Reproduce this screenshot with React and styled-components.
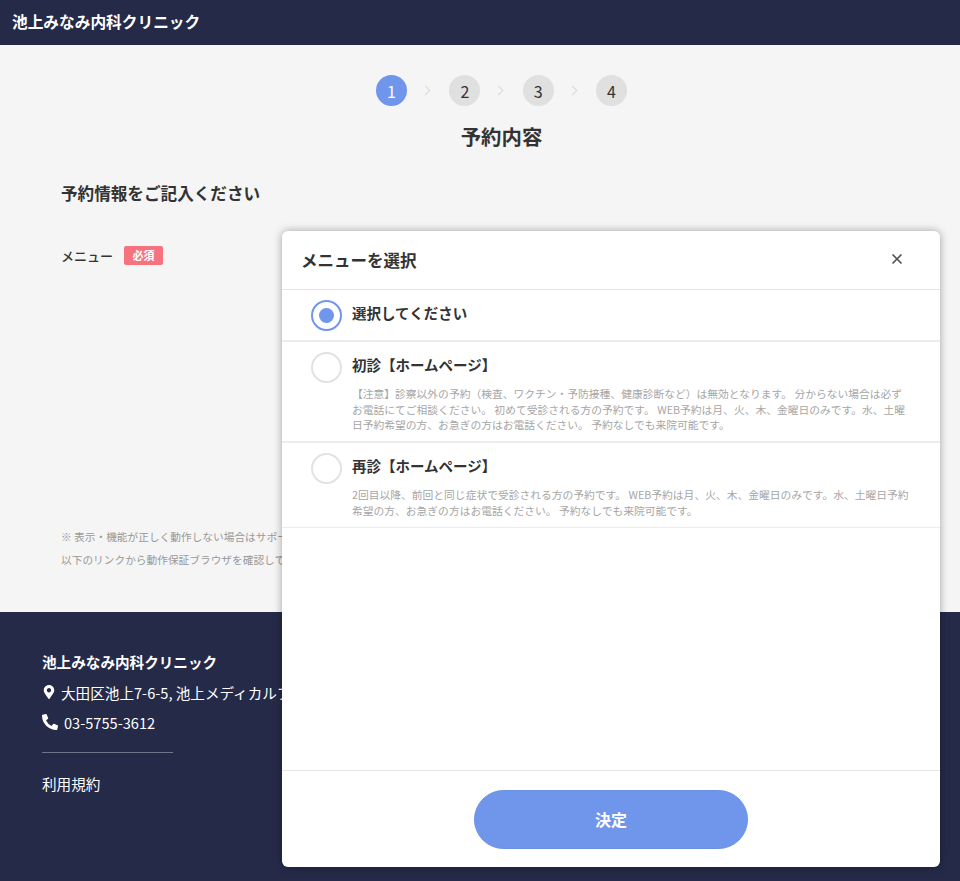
import React from 'react';
import styled, { createGlobalStyle } from 'styled-components';
import { FaMapMarkerAlt, FaPhoneAlt } from 'react-icons/fa';

const GlobalStyle = createGlobalStyle`
  html, body {
    margin: 0;
    padding: 0;
    height: 881px;
    overflow: hidden;
    background: #f5f5f5;
    font-family: "Noto Sans CJK JP", "Noto Sans", sans-serif;
    color: #333;
  }
  * { box-sizing: border-box; }
`;

const Page = styled.div`
  position: relative;
  width: 960px;
  height: 881px;
  overflow: hidden;
  display: flex;
  flex-direction: column;
`;

const Header = styled.header`
  height: 45px;
  flex: none;
  display: flex;
  align-items: center;
  padding: 0 0 3px 12px;
  background: #252a48;
  color: #fff;
  font-size: 15.7px;
  font-weight: 700;
`;

const Main = styled.main`
  height: 567px;
  flex: none;
  padding: 30px 18px 0 61px;
  background: #f5f5f5;
  overflow: hidden;
`;

const Stepper = styled.ol`
  display: flex;
  justify-content: center;
  align-items: center;
  gap: 42.33px;
  margin: 0;
  padding: 0;
  list-style: none;
`;

const Step = styled.li`
  position: relative;
  width: 31px;
  height: 31px;
  display: flex;
  align-items: center;
  justify-content: center;
  border-radius: 50%;
  background: ${({ $active }) => ($active ? '#7096eb' : '#e0e0e0')};
  color: ${({ $active }) => ($active ? '#fff' : '#333')};
  font-size: 16px;

  &:not(:last-child)::after {
    content: '';
    position: absolute;
    left: 46px;
    top: 12px;
    width: 6px;
    height: 6px;
    border-top: 1.5px solid #d8d8d8;
    border-right: 1.5px solid #d8d8d8;
    transform: rotate(45deg);
  }
`;

const Title = styled.h1`
  margin: 15px 0 0;
  text-align: center;
  font-size: 20.4px;
  line-height: 30px;
  font-weight: 700;
  color: #333;
`;

const SectionTitle = styled.h2`
  margin: 30px 0 0;
  font-size: 16.6px;
  line-height: 24px;
  font-weight: 700;
  color: #333;
`;

const FieldRow = styled.div`
  display: flex;
  align-items: center;
  gap: 11px;
  margin-top: 40px;
  height: 20px;
`;

const FieldLabel = styled.span`
  font-size: 13px;
  font-weight: 500;
  color: #333;
`;

const RequiredBadge = styled.span`
  width: 39px;
  height: 19px;
  display: flex;
  align-items: center;
  justify-content: center;
  border-radius: 2px;
  background: #f7727f;
  color: #fff;
  font-size: 11px;
  font-weight: 700;
`;

const Notes = styled.div`
  margin-top: 263px;
  width: 500px;
  white-space: nowrap;
`;

const Note = styled.p`
  margin: 0 0 5px;
  font-size: 10.7px;
  line-height: 18px;
  color: #999;
`;

const Footer = styled.footer`
  flex: 1;
  padding: 38px 0 0 42px;
  background: #252a48;
  color: #fff;
`;

const FooterName = styled.div`
  font-size: 14.6px;
  line-height: 24px;
  font-weight: 700;
`;

const FooterLine = styled.div`
  display: flex;
  align-items: center;
  gap: ${({ $gap }) => $gap}px;
  margin-top: 6px;
  height: 24px;
  font-size: 14.6px;
  white-space: nowrap;
`;

const FooterRule = styled.hr`
  width: 131px;
  height: 1px;
  margin: 18px 0 0;
  border: 0;
  background: #70748a;
`;

const FooterLink = styled.a`
  display: block;
  margin-top: 19px;
  font-size: 14.6px;
  line-height: 24px;
  color: #fff;
`;

const Modal = styled.div`
  position: absolute;
  left: 282px;
  top: 231px;
  width: 658px;
  height: 636px;
  display: flex;
  flex-direction: column;
  border-radius: 6px;
  background: #fff;
  box-shadow: 0 0 8px rgba(0, 0, 0, 0.35);
`;

const ModalHeader = styled.div`
  position: relative;
  height: 59px;
  flex: none;
  display: flex;
  align-items: center;
  padding-left: 19px;
  border-bottom: 1px solid #e6e6e6;
  font-size: 16.5px;
  font-weight: 700;
  color: #333;
`;

const CloseButton = styled.button`
  position: absolute;
  right: 36px;
  top: 21px;
  width: 14px;
  height: 14px;
  padding: 0;
  border: 0;
  background: none;
  color: #555;
  display: flex;
`;

const OptionList = styled.div`
  flex: 1;
`;

const Option = styled.label`
  display: flex;
  gap: 10px;
  min-height: 52px;
  padding: 10px 30px 8px 29px;
  border-bottom: 2px solid #ededed;
  &:last-child {
    border-bottom-width: 1px;
  }
`;

const Radio = styled.span`
  width: 31px;
  height: 31px;
  flex: none;
  display: flex;
  align-items: center;
  justify-content: center;
  border-radius: 50%;
  border: 2px solid ${({ $checked }) => ($checked ? '#7096eb' : '#e2e2e2')};
  background: #fff;

  &::after {
    content: '';
    display: ${({ $checked }) => ($checked ? 'block' : 'none')};
    width: 15px;
    height: 15px;
    border-radius: 50%;
    background: #7096eb;
  }
`;

const OptionBody = styled.div`
  min-width: 0;
`;

const OptionName = styled.div`
  font-size: 14.5px;
  line-height: 26px;
  font-weight: 700;
  color: #333;
`;

const OptionText = styled.div`
  margin-top: 8px;
  font-size: 10.77px;
  line-height: 15.7px;
  color: #a6a6a6;
`;

const ModalFooter = styled.div`
  height: 97px;
  flex: none;
  display: flex;
  justify-content: center;
  padding-top: 19px;
  border-top: 1px solid #e6e6e6;
`;

const SubmitButton = styled.button`
  width: 274px;
  height: 59px;
  padding: 0 0 2px;
  border: 1px solid #6a90e4;
  border-radius: 30px;
  background: #7096eb;
  color: #fff;
  font-family: inherit;
  font-size: 16px;
  font-weight: 700;
`;

const options = [
  { name: '選択してください', checked: true },
  {
    name: '初診【ホームページ】',
    text: '【注意】診察以外の予約（検査、ワクチン・予防接種、健康診断など）は無効となります。 分からない場合は必ずお電話にてご相談ください。 初めて受診される方の予約です。 WEB予約は月、火、木、金曜日のみです。水、土曜日予約希望の方、お急ぎの方はお電話ください。 予約なしでも来院可能です。',
  },
  {
    name: '再診【ホームページ】',
    text: '2回目以降、前回と同じ症状で受診される方の予約です。 WEB予約は月、火、木、金曜日のみです。水、土曜日予約希望の方、お急ぎの方はお電話ください。 予約なしでも来院可能です。',
  },
];

const App = () => (
  <Page>
    <GlobalStyle />
    <Header>池上みなみ内科クリニック</Header>

    <Main>
      <Stepper>
        {[1, 2, 3, 4].map((n) => (
          <Step key={n} $active={n === 1}>
            {n}
          </Step>
        ))}
      </Stepper>
      <Title>予約内容</Title>
      <SectionTitle>予約情報をご記入ください</SectionTitle>
      <FieldRow>
        <FieldLabel>メニュー</FieldLabel>
        <RequiredBadge>必須</RequiredBadge>
      </FieldRow>
      <Notes>
        <Note>※ 表示・機能が正しく動作しない場合はサポート対象外のブラウザをご利用の可能性があります。</Note>
        <Note>以下のリンクから動作保証ブラウザを確認してください。</Note>
      </Notes>
    </Main>

    <Footer>
      <FooterName>池上みなみ内科クリニック</FooterName>
      <FooterLine $gap={5}>
        <FaMapMarkerAlt size={14} />
        大田区池上7-6-5, 池上メディカルプラザ
      </FooterLine>
      <FooterLine $gap={6}>
        <FaPhoneAlt size={16} />
        03-5755-3612
      </FooterLine>
      <FooterRule />
      <FooterLink>利用規約</FooterLink>
    </Footer>

    <Modal>
      <ModalHeader>
        メニューを選択
        <CloseButton aria-label="閉じる">
          <svg width="14" height="14" viewBox="0 0 14 14">
            <path d="M2.5 2.5l9 9M11.5 2.5l-9 9" stroke="currentColor" strokeWidth="1.7" fill="none" />
          </svg>
        </CloseButton>
      </ModalHeader>
      <OptionList>
        {options.map((option) => (
          <Option key={option.name}>
            <Radio $checked={option.checked} />
            <OptionBody>
              <OptionName>{option.name}</OptionName>
              {option.text && <OptionText>{option.text}</OptionText>}
            </OptionBody>
          </Option>
        ))}
      </OptionList>
      <ModalFooter>
        <SubmitButton>決定</SubmitButton>
      </ModalFooter>
    </Modal>
  </Page>
);

export default App;
